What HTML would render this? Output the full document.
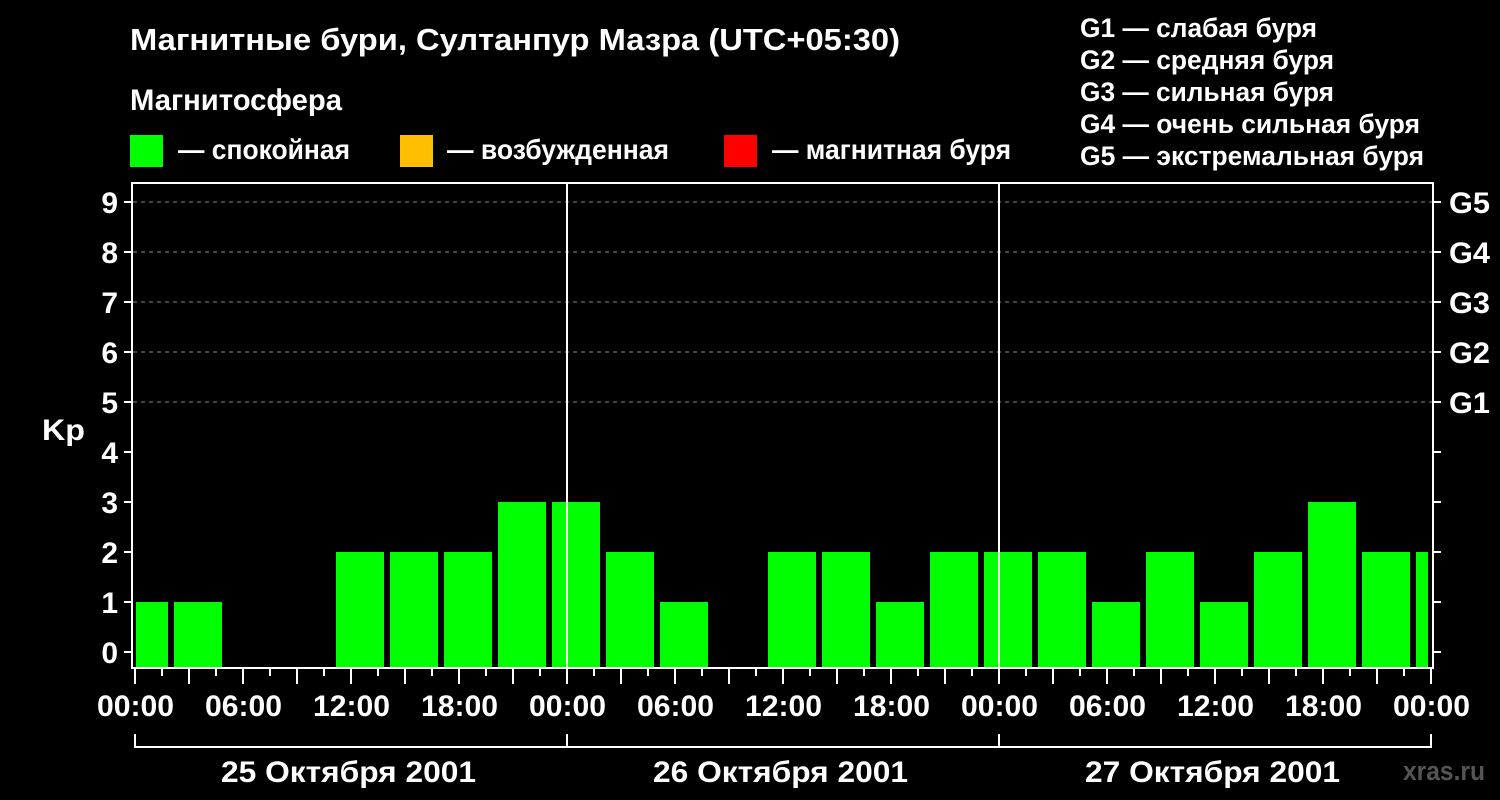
<!DOCTYPE html>
<html><head><meta charset="utf-8"><style>
html,body{margin:0;padding:0;background:#000;width:1500px;height:800px;overflow:hidden}
svg{display:block;font-family:"Liberation Sans",sans-serif;font-weight:bold}
</style></head><body>
<svg width="1500" height="800" viewBox="0 0 1500 800">
<rect width="1500" height="800" fill="#000"/>
<g fill="#fff">
<text x="130" y="50" font-size="31" textLength="770" lengthAdjust="spacingAndGlyphs">Магнитные бури, Султанпур Мазра (UTC+05:30)</text>
<text x="130" y="110" font-size="30" textLength="212" lengthAdjust="spacingAndGlyphs">Магнитосфера</text>
<text x="178" y="159" font-size="28" textLength="172" lengthAdjust="spacingAndGlyphs">— спокойная</text>
<text x="447" y="159" font-size="28" textLength="222" lengthAdjust="spacingAndGlyphs">— возбужденная</text>
<text x="772" y="159" font-size="28" textLength="239" lengthAdjust="spacingAndGlyphs">— магнитная буря</text>
<text x="1080" y="37" font-size="27" textLength="237" lengthAdjust="spacingAndGlyphs">G1 — слабая буря</text>
<text x="1080" y="69" font-size="27" textLength="254" lengthAdjust="spacingAndGlyphs">G2 — средняя буря</text>
<text x="1080" y="101" font-size="27" textLength="254" lengthAdjust="spacingAndGlyphs">G3 — сильная буря</text>
<text x="1080" y="133" font-size="27" textLength="340" lengthAdjust="spacingAndGlyphs">G4 — очень сильная буря</text>
<text x="1080" y="165" font-size="27" textLength="344" lengthAdjust="spacingAndGlyphs">G5 — экстремальная буря</text>
</g>
<rect x="130" y="135" width="33" height="32" fill="#00ff00"/>
<rect x="400" y="135" width="33" height="32" fill="#ffbf00"/>
<rect x="724" y="135" width="33" height="32" fill="#ff0000"/>
<g stroke="#888" stroke-dasharray="4,4" stroke-width="1">
<line x1="133" y1="202" x2="1432" y2="202"/><line x1="133" y1="252" x2="1432" y2="252"/>
<line x1="133" y1="302" x2="1432" y2="302"/><line x1="133" y1="352" x2="1432" y2="352"/>
<line x1="133" y1="402" x2="1432" y2="402"/>
</g>
<g fill="#00ff00">
<rect x="136" y="602" width="32" height="65"/><rect x="174" y="602" width="48" height="65"/>
<rect x="336" y="552" width="48" height="115"/><rect x="390" y="552" width="48" height="115"/>
<rect x="444" y="552" width="48" height="115"/><rect x="498" y="502" width="48" height="165"/>
<rect x="552" y="502" width="48" height="165"/><rect x="606" y="552" width="48" height="115"/>
<rect x="660" y="602" width="48" height="65"/><rect x="768" y="552" width="48" height="115"/>
<rect x="822" y="552" width="48" height="115"/><rect x="876" y="602" width="48" height="65"/>
<rect x="930" y="552" width="48" height="115"/><rect x="984" y="552" width="48" height="115"/>
<rect x="1038" y="552" width="48" height="115"/><rect x="1092" y="602" width="48" height="65"/>
<rect x="1146" y="552" width="48" height="115"/><rect x="1200" y="602" width="48" height="65"/>
<rect x="1254" y="552" width="48" height="115"/><rect x="1308" y="502" width="48" height="165"/>
<rect x="1362" y="552" width="48" height="115"/><rect x="1416" y="552" width="12" height="115"/>
</g>
<g stroke="#fff" stroke-width="2" fill="none">
<path d="M132 183 H1433 V668 H132 Z"/>
<line x1="567" y1="183" x2="567" y2="668"/><line x1="999" y1="183" x2="999" y2="668"/>
<path d="M124 202h8M124 252h8M124 302h8M124 352h8M124 402h8M124 452h8M124 502h8M124 552h8M124 602h8M124 652h8"/>
<path d="M1433 202h8M1433 252h8M1433 302h8M1433 352h8M1433 402h8M1433 452h8M1433 502h8M1433 552h8M1433 602h8M1433 652h8"/>
<path d="M135 668v16M162 668v8M189 668v16M216 668v8M243 668v16M270 668v8M297 668v16M324 668v8M351 668v16M378 668v8M405 668v16M432 668v8M459 668v16M486 668v8M513 668v16M540 668v8M567 668v16M594 668v8M621 668v16M648 668v8M675 668v16M702 668v8M729 668v16M756 668v8M783 668v16M810 668v8M837 668v16M864 668v8M891 668v16M918 668v8M945 668v16M972 668v8M999 668v16M1026 668v8M1053 668v16M1080 668v8M1107 668v16M1134 668v8M1161 668v16M1188 668v8M1215 668v16M1242 668v8M1269 668v16M1296 668v8M1323 668v16M1350 668v8M1377 668v16M1404 668v8M1431 668v16"/>
<path d="M135 734V747H1431V734M567 734V747M999 734V747"/>
</g>
<g fill="#fff" font-size="30" text-anchor="end">
<text x="118" y="213">9</text><text x="118" y="263">8</text><text x="118" y="313">7</text>
<text x="118" y="363">6</text><text x="118" y="413">5</text><text x="118" y="463">4</text>
<text x="118" y="513">3</text><text x="118" y="563">2</text><text x="118" y="613">1</text>
<text x="118" y="663">0</text>
</g>
<text x="42" y="440" fill="#fff" font-size="30" textLength="43" lengthAdjust="spacingAndGlyphs">Kp</text>
<g fill="#fff" font-size="30">
<text x="1449" y="213" textLength="41" lengthAdjust="spacingAndGlyphs">G5</text><text x="1449" y="263" textLength="41" lengthAdjust="spacingAndGlyphs">G4</text><text x="1449" y="313" textLength="41" lengthAdjust="spacingAndGlyphs">G3</text>
<text x="1449" y="363" textLength="41" lengthAdjust="spacingAndGlyphs">G2</text><text x="1449" y="413" textLength="41" lengthAdjust="spacingAndGlyphs">G1</text>
</g>
<g fill="#fff" font-size="30">
<text x="97" y="716" textLength="77" lengthAdjust="spacingAndGlyphs">00:00</text><text x="205" y="716" textLength="77" lengthAdjust="spacingAndGlyphs">06:00</text><text x="313" y="716" textLength="77" lengthAdjust="spacingAndGlyphs">12:00</text>
<text x="421" y="716" textLength="77" lengthAdjust="spacingAndGlyphs">18:00</text><text x="529" y="716" textLength="77" lengthAdjust="spacingAndGlyphs">00:00</text><text x="637" y="716" textLength="77" lengthAdjust="spacingAndGlyphs">06:00</text>
<text x="745" y="716" textLength="77" lengthAdjust="spacingAndGlyphs">12:00</text><text x="853" y="716" textLength="77" lengthAdjust="spacingAndGlyphs">18:00</text><text x="961" y="716" textLength="77" lengthAdjust="spacingAndGlyphs">00:00</text>
<text x="1069" y="716" textLength="77" lengthAdjust="spacingAndGlyphs">06:00</text><text x="1177" y="716" textLength="77" lengthAdjust="spacingAndGlyphs">12:00</text><text x="1285" y="716" textLength="77" lengthAdjust="spacingAndGlyphs">18:00</text>
<text x="1393" y="716" textLength="77" lengthAdjust="spacingAndGlyphs">00:00</text>
<text x="221" y="782" textLength="255" lengthAdjust="spacingAndGlyphs">25 Октября 2001</text>
<text x="653" y="782" textLength="255" lengthAdjust="spacingAndGlyphs">26 Октября 2001</text>
<text x="1085" y="782" textLength="255" lengthAdjust="spacingAndGlyphs">27 Октября 2001</text>
</g>
<text x="1403" y="780" fill="#555" font-size="27" textLength="82" lengthAdjust="spacingAndGlyphs">xras.ru</text>
</svg>
</body></html>
